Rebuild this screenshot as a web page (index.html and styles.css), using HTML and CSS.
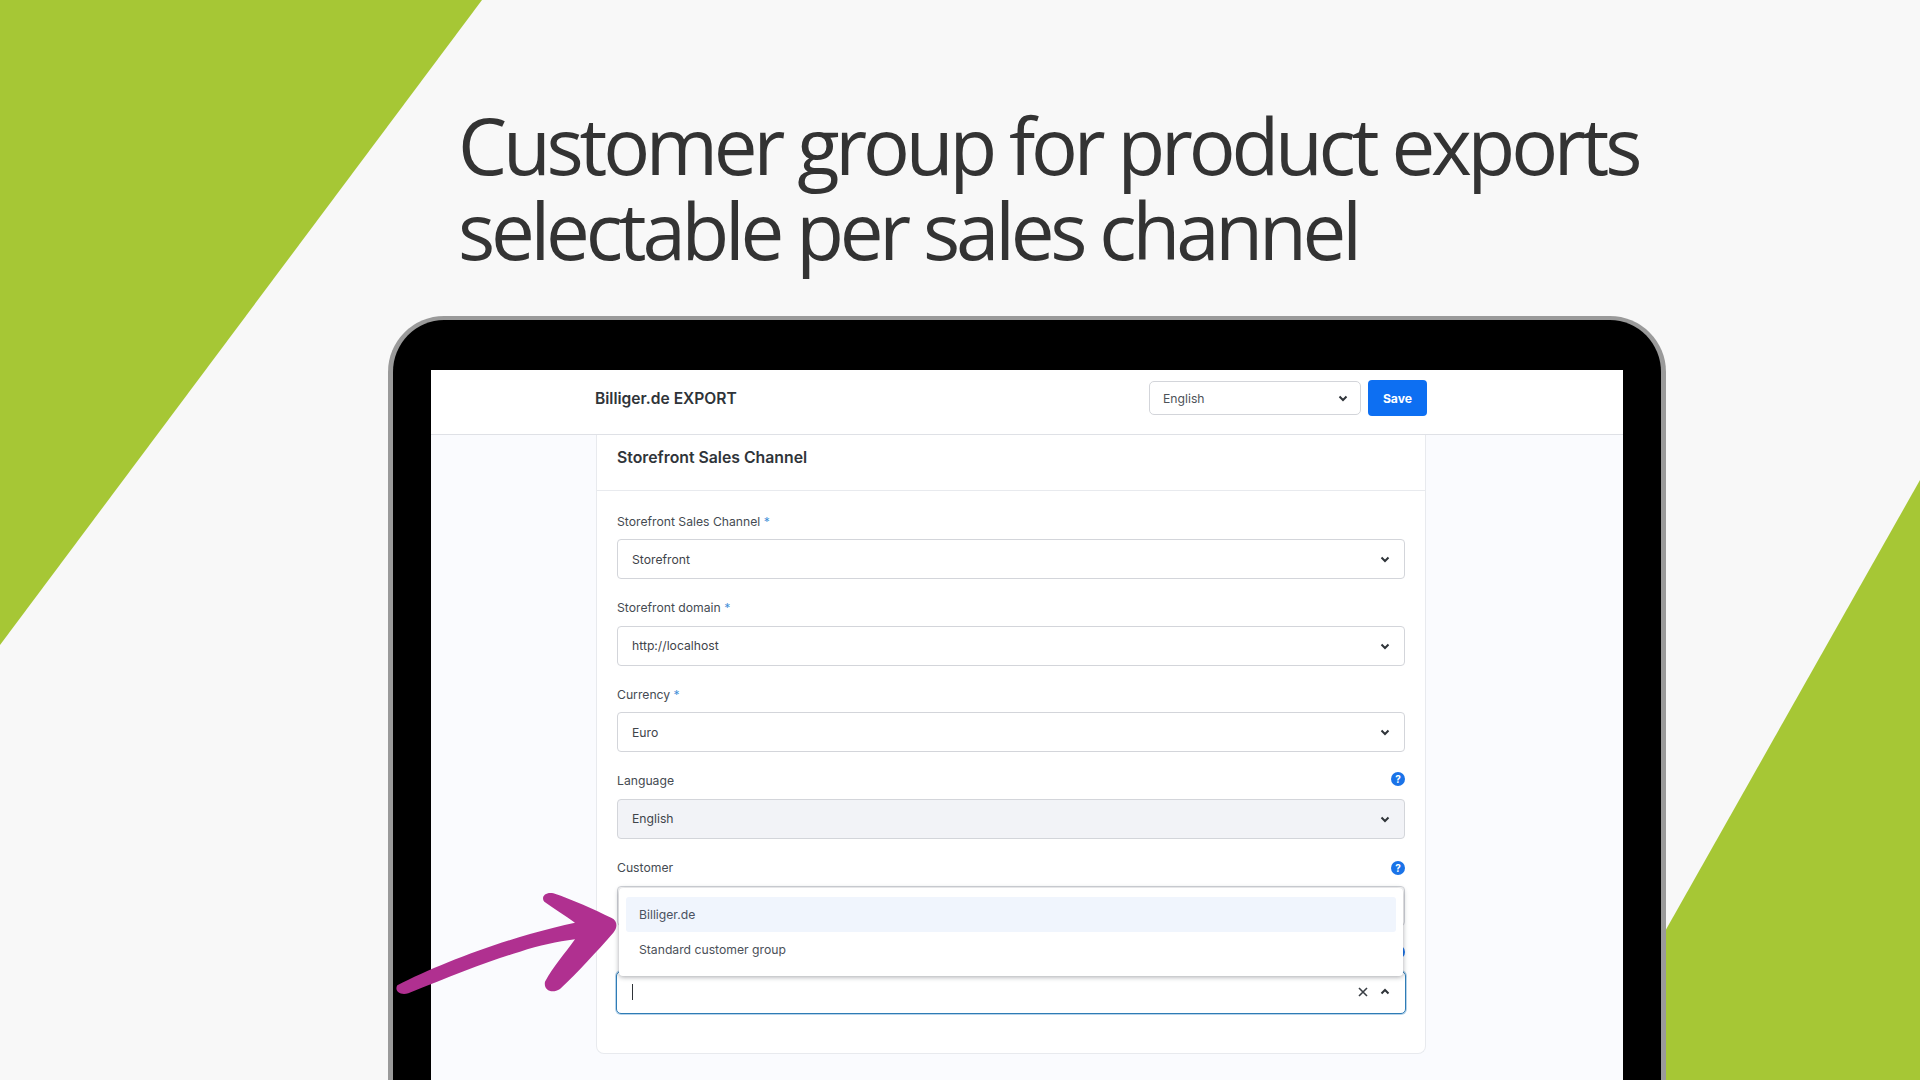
FILE: index.html
```html
<!DOCTYPE html>
<html lang="en">
<head>
<meta charset="utf-8">
<title>Customer group for product exports</title>
<link rel="stylesheet" href="styles.css">
</head>
<body>
<main class="stage">
  <svg class="backdrop" viewBox="0 0 1920 1080" aria-hidden="true">
    <polygon points="0,0 482,0 0,645"/>
    <polygon points="1920,480 1920,1080 1581,1080"/>
  </svg>
  <h1 class="headline">Customer group for product exports<br>selectable per sales channel</h1>
  <section class="device">
    <div class="screen">
      <header class="topbar">
        <div class="topbar-inner">
          <span class="app-title">Billiger.de EXPORT</span>
          <div class="select select-lang">
            <span class="select-text">English</span>
            <svg class="chev" viewBox="0 0 12 12"><path d="M2.500 4.500 6 8l3.500-3.500"/></svg>
          </div>
          <button class="save">Save</button>
        </div>
      </header>
      <div class="content">
        <div class="card">
          <h2 class="card-title">Storefront Sales Channel</h2>
          <div class="card-body">
            <div class="field">
              <label class="label"><span>Storefront Sales Channel <i>*</i></span></label>
              <div class="select"><span class="select-text">Storefront</span><svg class="chev" viewBox="0 0 12 12"><path d="M2.500 4.500 6 8l3.500-3.500"/></svg></div>
            </div>
            <div class="field">
              <label class="label"><span>Storefront domain <i>*</i></span></label>
              <div class="select"><span class="select-text">http://localhost</span><svg class="chev" viewBox="0 0 12 12"><path d="M2.500 4.500 6 8l3.500-3.500"/></svg></div>
            </div>
            <div class="field">
              <label class="label"><span>Currency <i>*</i></span></label>
              <div class="select"><span class="select-text">Euro</span><svg class="chev" viewBox="0 0 12 12"><path d="M2.500 4.500 6 8l3.500-3.500"/></svg></div>
            </div>
            <div class="field">
              <label class="label"><span>Language</span><b class="help">?</b></label>
              <div class="select select-disabled"><span class="select-text">English</span><svg class="chev" viewBox="0 0 12 12"><path d="M2.500 4.500 6 8l3.500-3.500"/></svg></div>
            </div>
            <div class="field field-open">
              <label class="label"><span>Customer</span><b class="help help-low">?</b></label>
              <div class="select"></div>
              <ul class="dropdown">
                <li class="option option-active">Billiger.de</li>
                <li class="option">Standard customer group</li>
              </ul>
            </div>
            <div class="field">
              <label class="label label-end"><b class="help"></b></label>
              <div class="select select-focus">
                <span class="caret"></span>
                <svg class="clear" viewBox="0 0 12 12"><path d="M2 2l8 8M10 2l-8 8"/></svg>
                <svg class="chev" viewBox="0 0 12 12"><path d="M2.500 7.500 6 4l3.500 3.500"/></svg>
              </div>
            </div>
          </div>
        </div>
      </div>
    </div>
  </section>
  <svg class="arrow" viewBox="0 0 1500 720" aria-hidden="true">
    <path d="M52 436C150 385 300 325 450 282C500 268 545 256 585 248C555 226 520 205 493 185C482 172 495 155 520 160C580 180 640 208 695 234C712 242 714 262 700 278C650 335 595 395 540 447C515 463 490 450 495 425C520 380 555 340 585 298C530 305 480 316 420 335C330 362 220 405 85 460C60 468 42 452 52 436Z"/>
  </svg>
</main>
</body>
</html>
```
FILE: styles.css
```css
* { box-sizing: border-box; }
html, body { margin: 0; padding: 0; }
body { background: #f8f8f8; font-family: "Inter", "Liberation Sans", sans-serif; color: #3a3f45; }

.stage { position: relative; width: 1920px; height: 1080px; overflow: hidden; padding-top: 103px; }
.backdrop { position: absolute; left: 0; top: 0; width: 1920px; height: 1080px; fill: #a6c735; }
.arrow { position: absolute; left: 380px; top: 840px; width: 500px; height: 240px; fill: #b03090; z-index: 5; }

.headline {
  position: relative;
  margin: 0 0 0 458px;
  font-family: "Open Sans", "Liberation Sans", sans-serif;
  font-size: 78px;
  font-weight: 400;
  line-height: 85px;
  letter-spacing: -4.200px;
  color: #333;
  white-space: nowrap;
}

.device {
  position: relative;
  margin: 43px 0 0 388px;
  width: 1278px;
  height: 800px;
  padding: 50px 38px 0;
  background: #000;
  border: 5px solid #9a9a9a;
  border-top-width: 4px;
  border-bottom: 0;
  border-radius: 56px 56px 0 0;
}
.screen { height: 100%; background: #fafbfe; display: flex; flex-direction: column; }

.topbar { height: 65px; flex: none; background: #fff; border-bottom: 1px solid #dfe1e6; }
.topbar-inner { width: 831px; height: 100%; margin-left: 165px; display: flex; align-items: center; gap: 7px; padding-bottom: 8px; }
.app-title { flex: 1; margin-left: -1px; font-size: 15.600px; font-weight: 600; color: #2f3439; }

.content { flex: 1; }
.card { width: 830px; margin-left: 165px; height: 619px; background: #fff; border: 1px solid #e8eaee; border-top: 0; border-radius: 0 0 8px 8px; }
.card-title { margin: 0; height: 56px; padding: 0 20px 10px; display: flex; align-items: center; font-size: 15.800px; font-weight: 600; color: #2f3439; border-bottom: 1px solid #e8eaee; }
.card-body { padding: 21px 20px 0; }

.field { position: relative; margin-bottom: 19.670px; }
.label { height: 18px; margin-bottom: 9px; display: flex; justify-content: space-between; align-items: center; font-size: 12.200px; color: #454b52; }
.label-end { justify-content: flex-end; }
.label i { font-style: normal; color: #3f8fd8; }
.help { width: 14px; height: 14px; margin-top: -4px; border-radius: 50%; background: #1a73e8; color: #fff; font-size: 10px; font-weight: 700; line-height: 14px; text-align: center; }
.help-low { margin-top: 0; }

.select { height: 40px; display: flex; align-items: center; gap: 12px; padding: 0 13px 0 14px; background: #fff; border: 1px solid #d3d5da; border-radius: 4px; font-size: 12.200px; color: #3f444a; }
.select-text { flex: 1; }
.select-lang { width: 212px; height: 34px; padding: 0 11px 0 13px; color: #4d5258; border-radius: 5px; }
.select-disabled { background: #f2f3f7; }
.select-focus { margin: -1px -1px 0; height: 43px; gap: 10px; padding: 0 14px 2px 15px; border: 1px solid #2f7cb5; box-shadow: 0 0 0 1px #b7d3ea; border-radius: 5px; }

.chev { width: 12px; height: 12px; flex: none; fill: none; stroke: #2f3439; stroke-width: 2; }
.clear { width: 12px; height: 12px; flex: none; fill: none; stroke: #3a3f45; stroke-width: 1.600; }
.caret { flex: none; width: 1px; height: 16px; margin-right: auto; background: #2f3439; }

.save { width: 59px; height: 36px; padding: 0; border: 0; border-radius: 4px; background: #0d6ff2; color: #fff; font: 700 12.200px "Inter", "Liberation Sans", sans-serif; }

.dropdown { position: absolute; z-index: 3; left: 2px; right: 2px; top: 29.500px; margin: 0; padding: 9px 7px; list-style: none; background: #fff; border-radius: 4px; box-shadow: 0 1px 5px rgba(30, 35, 45, .4); }
.option { height: 35px; padding-left: 13px; display: flex; align-items: center; font-size: 12.200px; color: #4b5058; border-radius: 3px; }
.option-active { background: #f0f5fd; color: #4a5260; }
```
